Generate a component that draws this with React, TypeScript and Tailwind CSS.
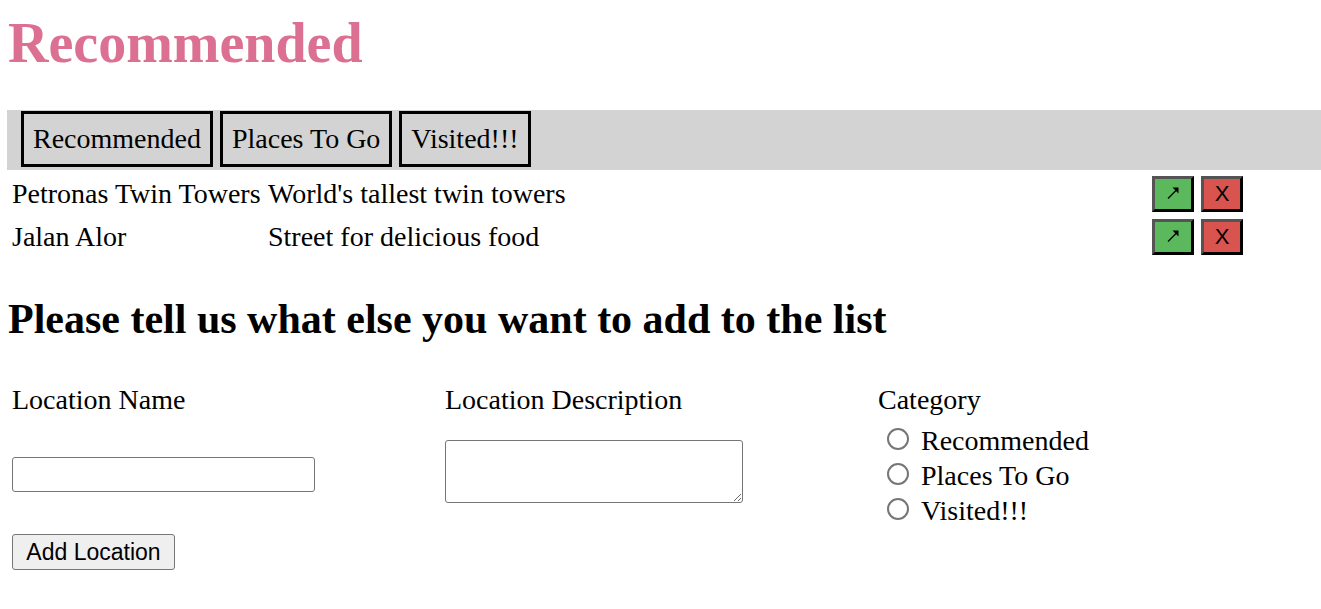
import React from "react";

const places = [
  { name: "Petronas Twin Towers", desc: "World's tallest twin towers" },
  { name: "Jalan Alor", desc: "Street for delicious food" },
];

function ArrowIcon() {
  return (
    <svg width="14" height="14" viewBox="0 0 14 14" className="relative -top-[1px]">
      <line x1="2" y1="12.5" x2="10.5" y2="4" stroke="black" strokeWidth="1.3" />
      <polygon points="12.5,1.5 12.5,7.5 6.5,1.5" fill="black" />
    </svg>
  );
}

function ActionButtons() {
  return (
    <div className="flex gap-[7px]">
      <button className="w-[42px] h-[36px] bg-[#5cb85c] border-[3px] border-black [border-style:outset] flex items-center justify-center p-0 text-black">
        <ArrowIcon />
      </button>
      <button className="w-[42px] h-[36px] bg-[#d9534f] border-[3px] border-black [border-style:outset] flex items-center justify-center p-0 font-['Liberation_Sans',Arial,sans-serif] text-[22px] leading-none text-black">
        X
      </button>
    </div>
  );
}

export default function App() {
  return (
    <div className="font-['Liberation_Serif','Times_New_Roman',serif] text-[28px] text-black bg-white min-h-[609px] overflow-hidden">
      <h1 className="ml-[8px] pt-[12px] mb-[36px] text-[56px] font-bold leading-[62px] text-[#db7093]">
        Recommended
      </h1>

      <nav className="ml-[7px] h-[60px] bg-[#d3d3d3] flex items-start pt-[1px] pl-[14px] gap-[7px]">
        {["Recommended", "Places To Go", "Visited!!!"].map((t) => (
          <button
            key={t}
            className="h-[56px] border-[3px] border-black bg-[#d3d3d3] px-[9px] text-[28px] leading-[32px] text-black font-['Liberation_Serif','Times_New_Roman',serif]"
          >
            {t}
          </button>
        ))}
      </nav>

      <div className="mt-[2px] ml-[8px]">
        {places.map((p) => (
          <div key={p.name} className="flex items-center h-[43px] pl-[4px]">
            <div className="w-[256px] leading-[32px] whitespace-nowrap">{p.name}</div>
            <div className="w-[884px] leading-[32px] whitespace-nowrap">{p.desc}</div>
            <ActionButtons />
          </div>
        ))}
      </div>

      <h2 className="ml-[8px] mt-[38px] text-[42px] font-bold leading-[46px]">
        Please tell us what else you want to add to the list
      </h2>

      <form className="ml-[8px] mt-[42px] grid grid-cols-[433px_433px_433px]">
        <div className="px-[4px] flex flex-col items-start">
          <label className="leading-[31px]">Location Name</label>
          <input
            type="text"
            className="mt-[42px] w-[303px] h-[35px] border-[1.5px] border-[#767676] rounded-[3px] bg-white"
          />
          <button
            type="button"
            className="mt-[42px] w-[163px] h-[36px] bg-[#efefef] border-[1.5px] border-[#767676] rounded-[3px] font-['Liberation_Sans',Arial,sans-serif] text-[23px] leading-none text-black"
          >
            Add Location
          </button>
        </div>
        <div className="px-[4px] flex flex-col items-start">
          <label className="leading-[31px]">Location Description</label>
          <textarea className="mt-[25px] w-[298px] h-[63px] border-[1.5px] border-[#767676] rounded-[3px] bg-white" />
        </div>
        <div className="px-[4px] flex flex-col items-start">
          <label className="leading-[31px]">Category</label>
          <div className="mt-[6px] flex flex-col">
            {["Recommended", "Places To Go", "Visited!!!"].map((c) => (
              <label key={c} className="flex items-center h-[35px] leading-[31px]">
                <input
                  type="radio"
                  name="category"
                  className="appearance-none ml-[9px] mr-[12px] w-[22px] h-[22px] rounded-full border-2 border-[#767676] bg-white"
                />
                <span className="relative top-[2px]">{c}</span>
              </label>
            ))}
          </div>
        </div>
      </form>
    </div>
  );
}
